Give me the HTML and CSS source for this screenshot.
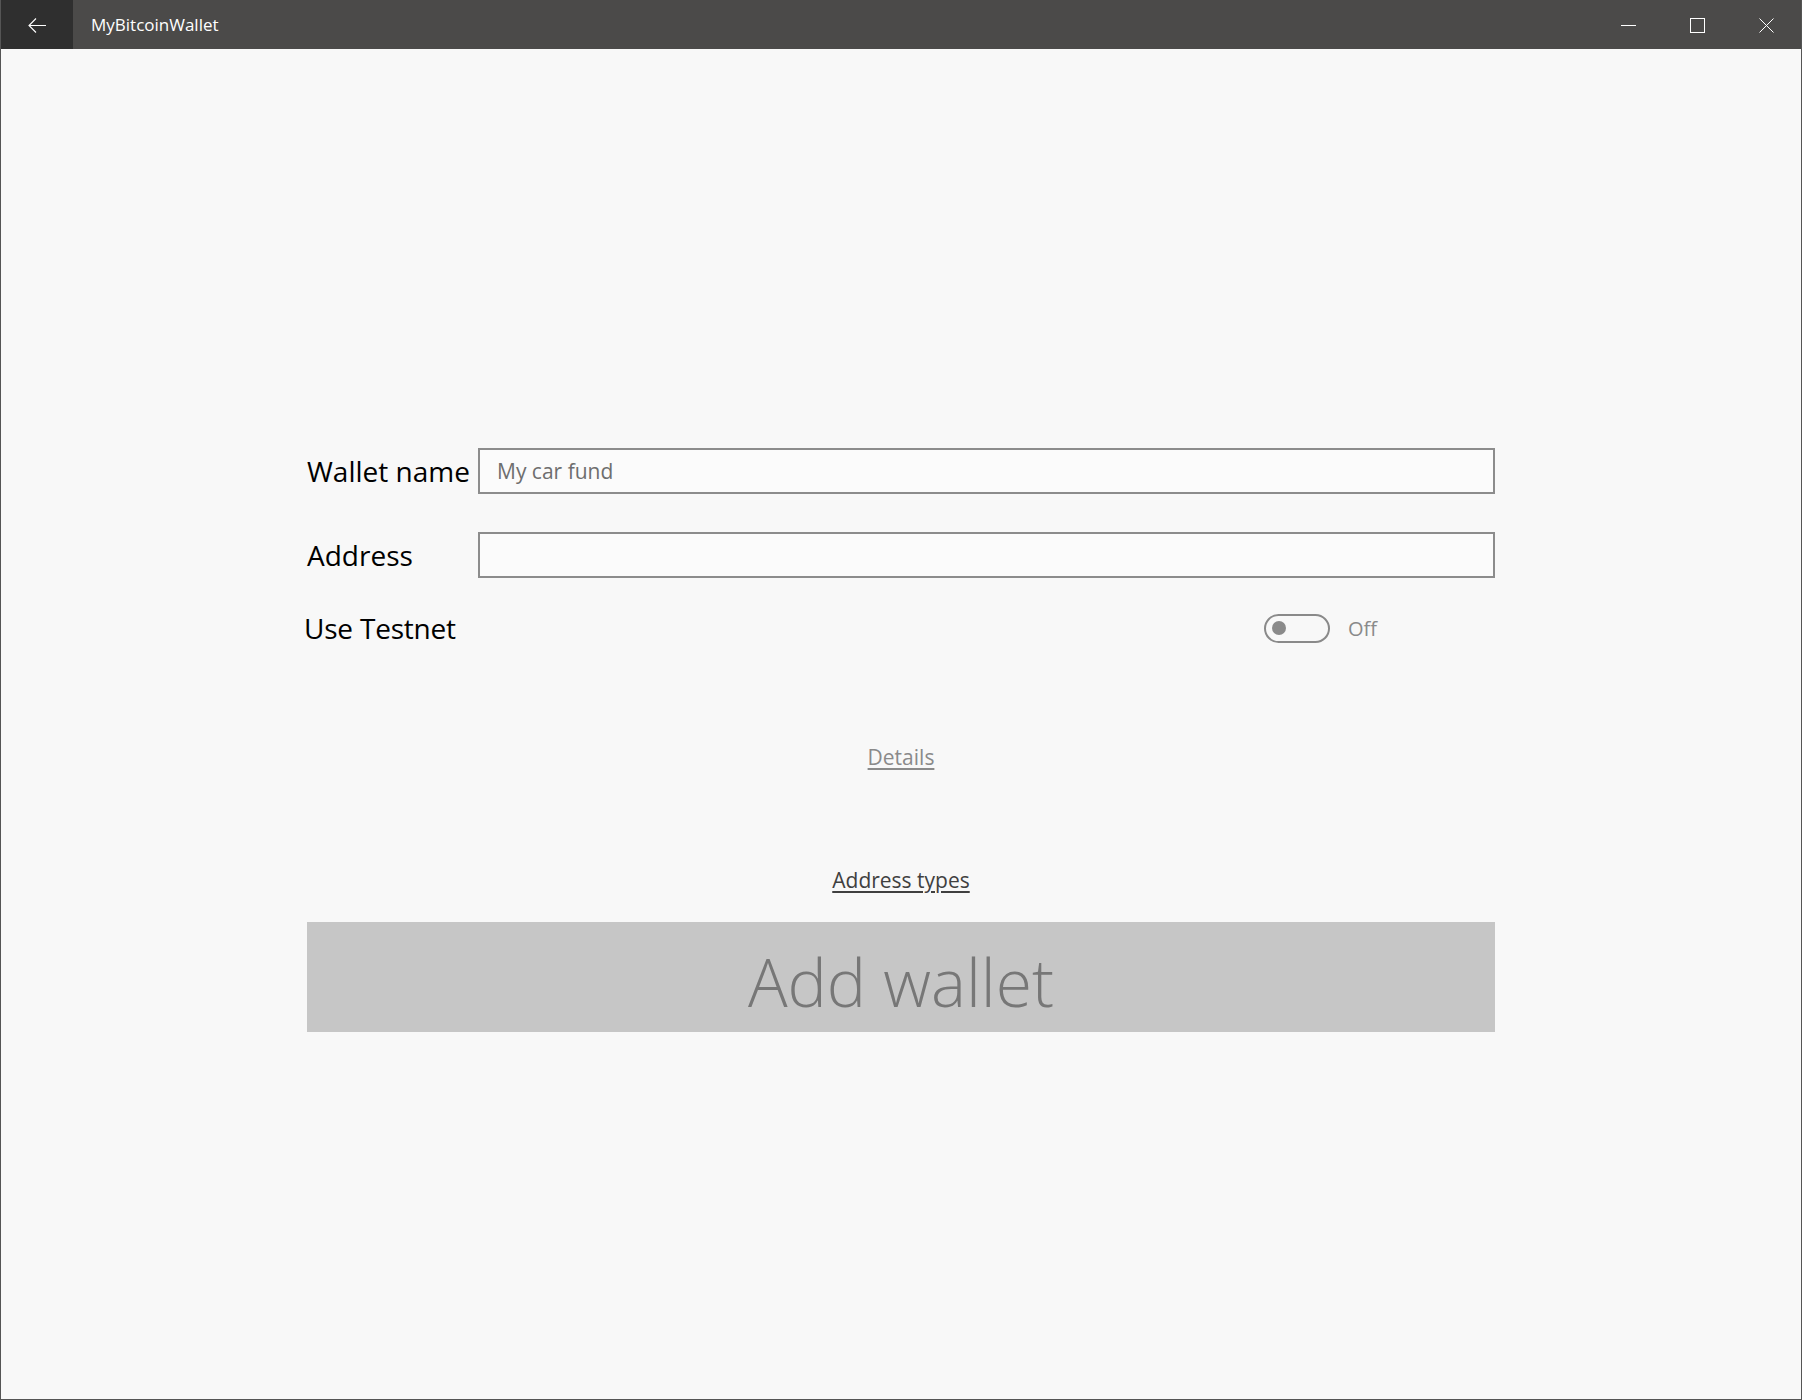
FILE: index.html
```html
<!DOCTYPE html>
<html lang="en">
<head>
    <meta charset="UTF-8">
    <meta name="viewport" content="width=device-width, initial-scale=1.0">
    <title>MyBitcoinWallet</title>
    <link rel="stylesheet" href="styles.css">
</head>
<body>
    <div class="window">
        <header class="titlebar">
            <button class="back-btn" aria-label="Back">
                <svg width="18" height="15" viewBox="0 0 18 15">
                    <path d="M1 7.5 H18 M8 0.5 L1 7.5 L8 14.5" fill="none" stroke="#fff" stroke-width="1.1"/>
                </svg>
            </button>
            <span class="app-title">MyBitcoinWallet</span>
            <div class="caption-buttons">
                <span class="cap-btn">
                    <svg width="15" height="15" viewBox="0 0 15 15"><path d="M0 7.5 H15" stroke="#fff" stroke-width="1"/></svg>
                </span>
                <span class="cap-btn">
                    <svg width="15" height="15" viewBox="0 0 15 15"><rect x="0.5" y="0.5" width="14" height="14" fill="none" stroke="#fff" stroke-width="1"/></svg>
                </span>
                <span class="cap-btn">
                    <svg width="15" height="15" viewBox="0 0 15 15"><path d="M0.5 0.5 L14.5 14.5 M14.5 0.5 L0.5 14.5" stroke="#fff" stroke-width="1"/></svg>
                </span>
            </div>
        </header>

        <main class="content">
            <form class="wallet-form">
                <div class="field-row">
                    <label class="field-label" for="wallet-name">Wallet name</label>
                    <input class="field-input" type="text" id="wallet-name" placeholder="My car fund">
                </div>
                <div class="field-row">
                    <label class="field-label" for="address">Address</label>
                    <input class="field-input" type="text" id="address">
                </div>
                <div class="toggle-row">
                    <span class="field-label testnet-label">Use Testnet</span>
                    <div class="toggle">
                        <span class="toggle-track"><span class="toggle-knob"></span></span>
                        <span class="toggle-state">Off</span>
                    </div>
                </div>
                <div class="link-row details-row">
                    <a class="link link-muted" href="#">Details</a>
                </div>
                <div class="link-row types-row">
                    <a class="link" href="#">Address types</a>
                </div>
                <button type="button" class="add-btn">Add wallet</button>
            </form>
        </main>
    </div>
</body>
</html>
```

FILE: styles.css
```css
* {
    box-sizing: border-box;
}

html, body {
    margin: 0;
    padding: 0;
}

body {
    font-family: "Open Sans", "Noto Sans", sans-serif;
    background: #f8f8f8;
}

.window {
    height: 1400px;
    border: 1px solid #555555;
    border-top: none;
    background: #f8f8f8;
    display: flex;
    flex-direction: column;
}

/* title bar */
.titlebar {
    height: 49px;
    background: #4b4a49;
    display: flex;
    align-items: center;
    color: #fff;
}

.back-btn {
    width: 72px;
    height: 49px;
    border: none;
    padding: 0;
    background: #2f2f2f;
    display: flex;
    align-items: center;
    justify-content: center;
}

.back-btn svg {
    margin-top: 1px;
}

.app-title {
    margin-left: 18px;
    font-size: 17px;
    color: #fff;
}

.caption-buttons {
    margin-left: auto;
    display: flex;
    height: 49px;
}

.cap-btn {
    width: 69px;
    height: 49px;
    display: flex;
    align-items: center;
    justify-content: center;
}

.cap-btn svg {
    margin-top: 1px;
}

/* form */
.content {
    flex: 1;
    padding-top: 399px;
}

.wallet-form {
    width: 1188px;
    margin: 0 auto;
}

.field-row {
    display: flex;
    align-items: center;
    height: 46px;
    margin-bottom: 38px;
}

.field-label {
    width: 171px;
    flex-shrink: 0;
    font-size: 28px;
    color: #000;
    white-space: nowrap;
}

.field-input {
    flex: 1;
    height: 46px;
    border: 2px solid #8c8c8c;
    background: #fbfbfb;
    padding: 0 17px;
    font-family: "Open Sans", "Noto Sans", sans-serif;
    font-size: 21px;
    color: #333;
    outline: none;
}

.field-input::placeholder {
    color: #6e6e6e;
}

.toggle-row {
    display: flex;
    align-items: center;
    height: 38px;
    margin-top: -7px;
}

.testnet-label {
    width: 960px;
    margin-left: -3px;
    letter-spacing: -0.2px;
}

.toggle {
    display: flex;
    align-items: center;
}

.toggle-track {
    width: 66px;
    height: 29px;
    border: 2px solid #8a8a8a;
    border-radius: 15px;
    display: flex;
    align-items: center;
    padding-left: 6px;
}

.toggle-knob {
    width: 14px;
    height: 14px;
    border-radius: 50%;
    background: #8a8a8a;
}

.toggle-state {
    margin-left: 18px;
    font-size: 20px;
    color: #8a8a8a;
}

.link-row {
    text-align: center;
    line-height: normal;
}

.details-row {
    margin-top: 96px;
}

.types-row {
    margin-top: 95px;
}

.link {
    font-size: 21px;
    color: #404040;
    text-decoration: underline;
    text-underline-offset: 3px;
}

.link-muted {
    color: #8a8a8a;
}

.add-btn {
    display: block;
    width: 100%;
    height: 110px;
    margin-top: 28px;
    border: none;
    background: #c6c6c6;
    font-family: "Open Sans", "Noto Sans", sans-serif;
    font-weight: 300;
    font-size: 66px;
    color: #777777;
    padding: 8px 0 0 0;
}
```
